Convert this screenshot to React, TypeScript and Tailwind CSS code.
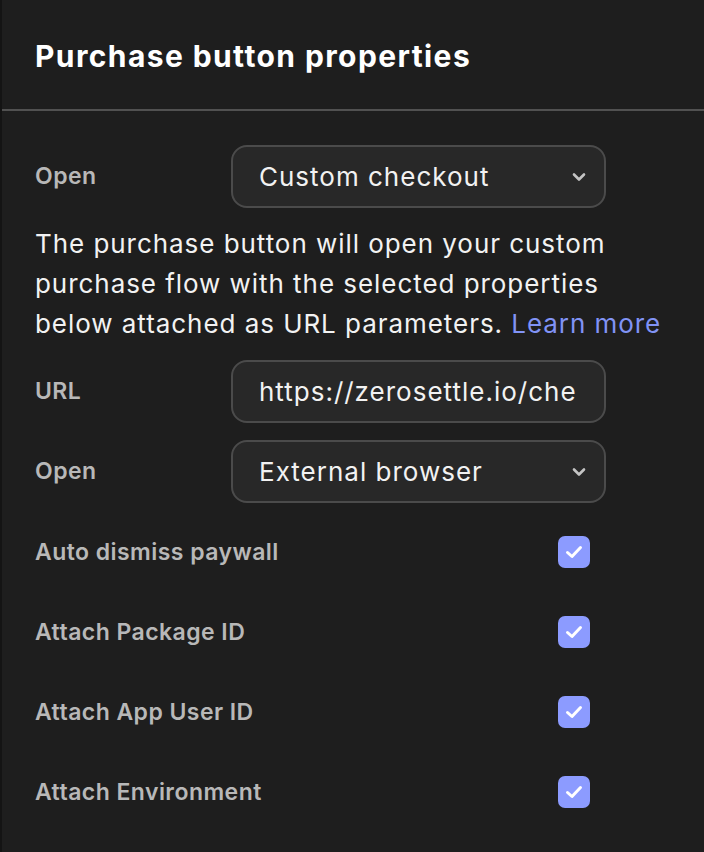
import React from "react";

function Chevron() {
  return (
    <svg width="14" height="10" viewBox="0 0 14 10" fill="none" className="shrink-0">
      <path d="M2 2.5 L7 7.5 L12 2.5" stroke="#c4c4c4" strokeWidth="2.6" strokeLinecap="round" strokeLinejoin="round" />
    </svg>
  );
}

function Check() {
  return (
    <div className="w-[32px] h-[32px] rounded-[7px] bg-[#8c9bff] flex items-center justify-center">
      <svg width="20" height="16" viewBox="0 0 20 16" fill="none">
        <path d="M3.5 8.5 L8 12.5 L16.5 3.5" stroke="#ffffff" strokeWidth="3" strokeLinecap="round" strokeLinejoin="round" />
      </svg>
    </div>
  );
}

function SelectBox({ value }: { value: string }) {
  return (
    <div className="w-[375px] h-[63px] rounded-[16px] border-2 border-[#4b4b4b] bg-[#282828] flex items-center justify-between pl-[26px] pr-[18px]">
      <span className="text-[26px] text-[#f2f2f2] tracking-[1px]">{value}</span>
      <Chevron />
    </div>
  );
}

export default function App() {
  const checks = ["Auto dismiss paywall", "Attach Package ID", "Attach App User ID", "Attach Environment"];
  return (
    <div className="w-[704px] h-[852px] bg-[#1e1e1e] border-l-2 border-[#141414] overflow-hidden" style={{ fontFamily: "Inter, 'Noto Sans', sans-serif" }}>
      <div className="h-[109px] flex items-center pl-[33px] pt-[3px]">
        <h1 className="text-[30px] font-bold text-white tracking-[1.4px]">Purchase button properties</h1>
      </div>
      <div className="h-[2px] bg-[#515151]" />
      <div className="pl-[33px] pt-[34px] flex flex-col">
        <div className="flex items-center">
          <span className="w-[196px] text-[23px] font-semibold text-[#b8b8b8] tracking-[0.45px]">Open</span>
          <SelectBox value="Custom checkout" />
        </div>
        <p className="mt-[16px] w-[640px] text-[26px] leading-[40px] text-[#f2f2f2] tracking-[0.95px]">
          The purchase button will open your custom purchase flow with the selected properties below attached as URL parameters. <span className="text-[#8193f5]">Learn more</span>
        </p>
        <div className="mt-[16px] flex items-center">
          <span className="w-[196px] text-[23px] font-semibold text-[#b8b8b8] tracking-[0.45px]">URL</span>
          <div className="w-[375px] h-[63px] rounded-[16px] border-2 border-[#4b4b4b] bg-[#282828] flex items-center pl-[26px] pr-[28px] overflow-hidden">
            <span className="text-[26px] text-[#f2f2f2] whitespace-nowrap overflow-hidden tracking-[1px]">https://zerosettle.io/checkout</span>
          </div>
        </div>
        <div className="mt-[17px] flex items-center">
          <span className="w-[196px] text-[23px] font-semibold text-[#b8b8b8] tracking-[0.45px]">Open</span>
          <SelectBox value="External browser" />
        </div>
        <div className="mt-[9px] flex flex-col">
          {checks.map((c) => (
            <div key={c} className="h-[80px] flex items-center">
              <span className="w-[523px] text-[23px] font-semibold text-[#b8b8b8] tracking-[0.45px]">{c}</span>
              <Check />
            </div>
          ))}
        </div>
      </div>
    </div>
  );
}
